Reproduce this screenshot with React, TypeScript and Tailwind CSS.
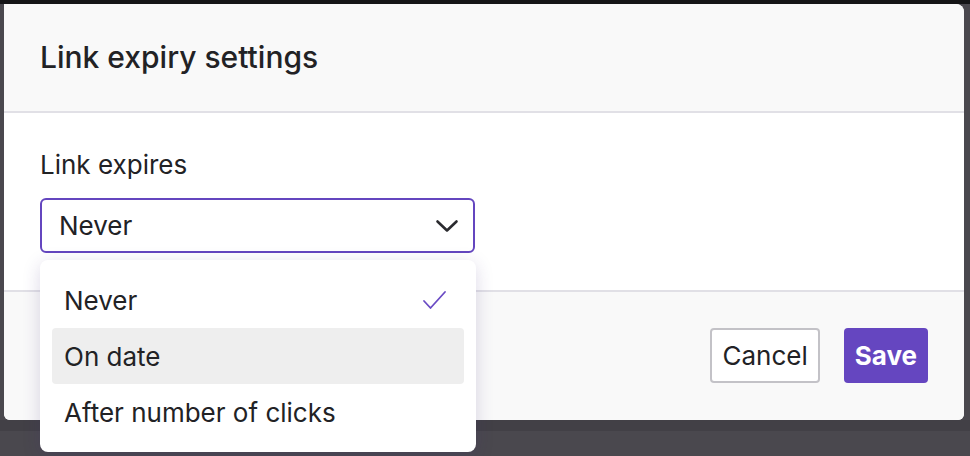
import React from 'react';

const font = { fontFamily: 'Inter, "Noto Sans", sans-serif' };

function Chevron() {
  return (
    <svg width="24" height="24" viewBox="0 0 24 24" fill="none" stroke="#2b2b2f" strokeWidth="2.6" strokeLinecap="round" strokeLinejoin="round">
      <path d="M2.5 7.5 L12 16.5 L21.5 7.5" />
    </svg>
  );
}

function Check() {
  return (
    <svg width="26" height="22" viewBox="0 0 26 22" fill="none" stroke="#6a4bc4" strokeWidth="1.8" strokeLinecap="round" strokeLinejoin="round">
      <path d="M2 12 L8.5 19 L23 3" />
    </svg>
  );
}

export default function App() {
  const options = ['Never', 'On date', 'After number of clicks'];

  return (
    <div className="relative w-[970px] h-[456px] overflow-hidden bg-[#4a484e] text-[#222225]" style={font}>
      {/* backdrop bands */}
      <div className="h-[4px] bg-[#151517]" />
      <div className="absolute left-0 right-0 top-[420px] h-[11px] bg-[#424046]" />

      {/* modal */}
      <div className="relative ml-[4px] w-[960px] h-[416px] rounded-tr-lg rounded-b-md overflow-hidden flex flex-col bg-white">
        <div className="h-[109px] shrink-0 bg-[#f9f9f9] border-b-2 border-[#e1e0e6] px-9 flex items-center">
          <h2 className="text-[30px] font-medium text-[#222225]">Link expiry settings</h2>
        </div>

        <div className="h-[177px] shrink-0 bg-white px-9 pt-[36px]">
          <div className="text-[26px] leading-[32px]">Link expires</div>
          <div className="mt-[17px] w-[435px] h-[55px] rounded-md border-2 border-[#6446bf] flex items-center justify-between pl-[17px] pr-[14px]">
            <span className="text-[26px]">Never</span>
            <Chevron />
          </div>
        </div>

        <div className="flex-1 bg-[#f9f9f9] border-t-2 border-[#e1e0e6] flex items-start justify-end gap-6 pr-9 pt-[36px]">
          <button className="h-[55px] px-[10px] rounded border-2 border-[#c3c2c7] bg-white text-[26px] text-[#222225]">Cancel</button>
          <button className="h-[55px] px-[11px] rounded bg-[#6546c0] text-[26px] font-bold text-white">Save</button>
        </div>
      </div>

      {/* dropdown menu */}
      <div className="absolute left-[40px] top-[260px] w-[436px] h-[192px] rounded-lg bg-white shadow-[0_4px_18px_rgba(60,40,120,0.18)] p-3 flex flex-col">
        {options.map((o, i) => (
          <div
            key={o}
            className={
              'h-[56px] shrink-0 rounded flex items-center justify-between pl-3 pr-[16px] text-[26px] ' +
              (i === 1 ? 'bg-[#eeeeee]' : '')
            }
          >
            <span>{o}</span>
            {i === 0 && <Check />}
          </div>
        ))}
      </div>
    </div>
  );
}
